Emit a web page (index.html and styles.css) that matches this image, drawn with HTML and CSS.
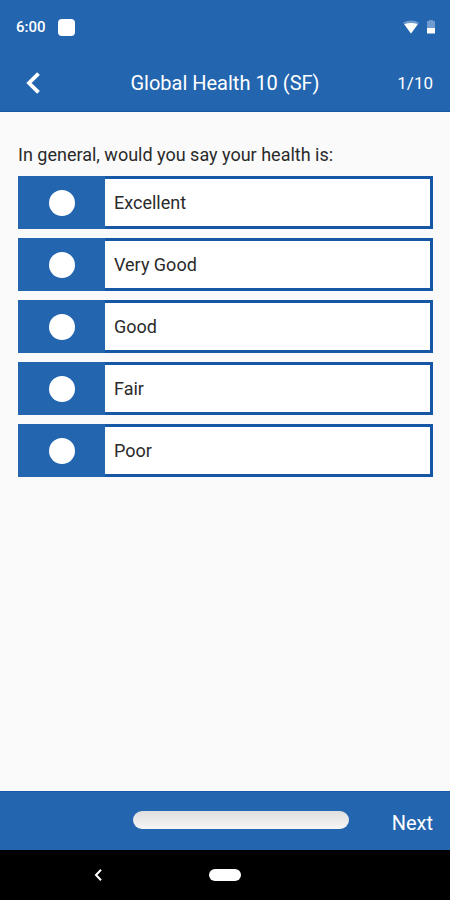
FILE: index.html
```html
<!DOCTYPE html>
<html lang="en">
<head>
    <meta charset="UTF-8">
    <meta name="viewport" content="width=device-width, initial-scale=1.0">
    <title>Global Health 10 (SF)</title>
    <link rel="stylesheet" href="styles.css">
</head>
<body>
    <div class="status-bar">
        <span class="time">6:00</span>
        <span class="notification"></span>
        <svg class="wifi" width="18" height="14" viewBox="0 0 18 14" aria-hidden="true">
            <path d="M1 2.8Q9 -2 17 2.8L9 13.5Z" fill="#6f9bd0"/>
            <path d="M2.2 4.3Q9 1.6 15.8 4.3L9 13.5Z" fill="#fff"/>
        </svg>
        <svg class="battery" width="10" height="16" viewBox="0 0 10 16" aria-hidden="true">
            <path d="M3 1H7V2H9V9H1V2H3Z" fill="#6f9bd0"/>
            <path d="M1 9H9V14.5H1Z" fill="#fff"/>
        </svg>
    </div>

    <header class="header">
        <button class="back" type="button" aria-label="Back">
            <svg width="16" height="22" viewBox="0 0 16 22" aria-hidden="true">
                <path d="M13.5 1.7L4 11L13.5 20.3" fill="none" stroke="#fff" stroke-width="3.8"/>
            </svg>
        </button>
        <h1 class="title">Global Health 10 (SF)</h1>
        <span class="counter">1/10</span>
    </header>

    <main class="content">
        <form id="question-form">
            <fieldset class="question">
                <legend class="question-text">In general, would you say your health is:</legend>
                <div class="options">
                    <label class="option">
                        <span class="option-mark"><input type="radio" name="health" value="excellent"></span>
                        <span class="option-text">Excellent</span>
                    </label>
                    <label class="option">
                        <span class="option-mark"><input type="radio" name="health" value="very-good"></span>
                        <span class="option-text">Very Good</span>
                    </label>
                    <label class="option">
                        <span class="option-mark"><input type="radio" name="health" value="good"></span>
                        <span class="option-text">Good</span>
                    </label>
                    <label class="option">
                        <span class="option-mark"><input type="radio" name="health" value="fair"></span>
                        <span class="option-text">Fair</span>
                    </label>
                    <label class="option">
                        <span class="option-mark"><input type="radio" name="health" value="poor"></span>
                        <span class="option-text">Poor</span>
                    </label>
                </div>
            </fieldset>
        </form>
    </main>

    <footer class="footer">
        <progress class="progress" value="0" max="10" aria-label="Progress"></progress>
        <button class="next" type="submit" form="question-form">Next</button>
    </footer>

    <nav class="system-nav">
        <button class="system-back" type="button" aria-label="System back">
            <svg width="10" height="14" viewBox="0 0 10 14" aria-hidden="true">
                <path d="M8 1.8L3 7L8 12.2" fill="none" stroke="#fff" stroke-width="2"/>
            </svg>
        </button>
        <button class="system-home" type="button" aria-label="Home"></button>
    </nav>
</body>
</html>
```

FILE: styles.css
```css
* {
    box-sizing: border-box;
}

body {
    margin: 0;
    min-height: 100vh;
    display: flex;
    flex-direction: column;
    font-family: Roboto, sans-serif;
    background-color: #fafafa;
    color: #2a2a2a;
}

button {
    padding: 0;
    border: none;
    background: none;
    font-family: inherit;
    color: #fff;
    cursor: pointer;
}

svg {
    display: block;
}

/* Status bar */
.status-bar {
    display: flex;
    align-items: center;
    height: 54px;
    padding: 0 14px 0 16px;
    background-color: #2365af;
    color: #fff;
}

.time {
    font-size: 15px;
    font-weight: 500;
}

.notification {
    width: 17px;
    height: 17px;
    margin-left: 12px;
    border-radius: 4px;
    background-color: #fff;
}

.wifi {
    margin-left: auto;
}

.battery {
    margin-left: 6px;
}

/* Header */
.header {
    display: grid;
    grid-template-columns: 1fr auto 1fr;
    align-items: center;
    height: 58px;
    padding: 0 17px;
    background-color: #2365af;
    border-bottom: 1px solid #1458a8;
    color: #fff;
}

.back {
    justify-self: start;
    padding: 0 8px;
}

.title {
    margin: 0;
    font-size: 20px;
    font-weight: 400;
}

.counter {
    justify-self: end;
    font-size: 17px;
}

/* Question */
.content {
    flex: 1;
    padding: 30px 17px 30px 18px;
}

.question {
    margin: 0;
    padding: 0;
    border: none;
    min-width: 0;
}

.question-text {
    padding: 0;
    font-size: 18px;
    line-height: 26px;
}

.options {
    display: flex;
    flex-direction: column;
    gap: 9px;
    padding-top: 8px;
}

.option {
    display: flex;
    height: 53px;
    cursor: pointer;
}

.option-mark {
    display: flex;
    align-items: center;
    justify-content: center;
    width: 87px;
    background-color: #2365af;
}

.option-mark input {
    appearance: none;
    width: 26px;
    height: 26px;
    margin: 0;
    border-radius: 50%;
    background-color: #fff;
}

.option-mark input:checked {
    border: 6px solid #fff;
    background-color: #2365af;
}

.option-text {
    flex: 1;
    padding-left: 9px;
    border: 3px solid #1557a5;
    border-left: none;
    background-color: #fff;
    font-size: 18px;
    line-height: 48px;
}

/* Footer */
.footer {
    display: grid;
    grid-template-columns: 1fr 48vw 1fr;
    height: 59px;
    padding: 0 17px 0 48px;
    background-color: #2365af;
    border-top: 1px solid #1458a8;
}

.progress {
    grid-column: 2;
    appearance: none;
    width: 100%;
    height: 18px;
    margin-top: 19px;
    border: none;
    border-radius: 9px;
    overflow: hidden;
}

.progress::-webkit-progress-bar {
    background: linear-gradient(#dedede, #f6f6f6);
}

.progress::-webkit-progress-value {
    background-color: #6f9bd0;
}

.next {
    justify-self: end;
    padding-top: 4px;
    font-size: 20px;
}

/* System navigation */
.system-nav {
    display: grid;
    grid-template-columns: 1fr auto 1fr;
    align-items: center;
    height: 50px;
    background-color: #000;
}

.system-back {
    justify-self: center;
    padding-right: 14px;
}

.system-home {
    width: 32px;
    height: 12px;
    border-radius: 6px;
    background-color: #fff;
}
```
